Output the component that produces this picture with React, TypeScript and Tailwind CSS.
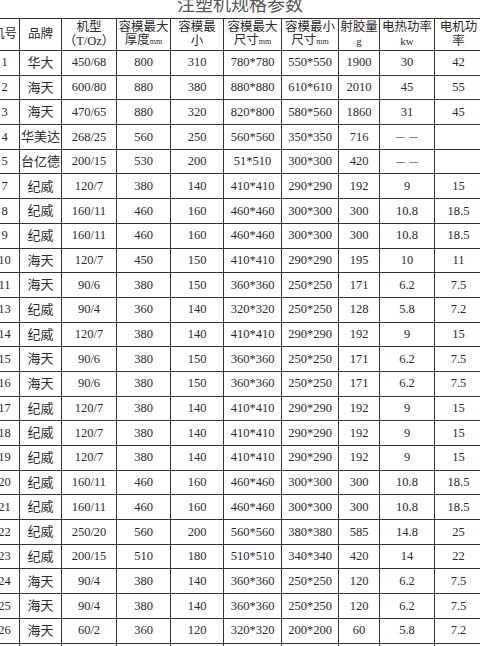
const cols = "grid-cols-[30px_42px_55px_54px_53px_58px_57px_41px_55px_48px]";

const rows: string[][] = [
  ["1", "华大", "450/68", "800", "310", "780*780", "550*550", "1900", "30", "42"],
  ["2", "海天", "600/80", "880", "380", "880*880", "610*610", "2010", "45", "55"],
  ["3", "海天", "470/65", "880", "320", "820*800", "580*560", "1860", "31", "45"],
  ["4", "华美达", "268/25", "560", "250", "560*560", "350*350", "716", "——", ""],
  ["5", "台亿德", "200/15", "530", "200", "51*510", "300*300", "420", "——", ""],
  ["7", "纪威", "120/7", "380", "140", "410*410", "290*290", "192", "9", "15"],
  ["8", "纪威", "160/11", "460", "160", "460*460", "300*300", "300", "10.8", "18.5"],
  ["9", "纪威", "160/11", "460", "160", "460*460", "300*300", "300", "10.8", "18.5"],
  ["10", "海天", "120/7", "450", "150", "410*410", "290*290", "195", "10", "11"],
  ["11", "海天", "90/6", "380", "150", "360*360", "250*250", "171", "6.2", "7.5"],
  ["13", "纪威", "90/4", "360", "140", "320*320", "250*250", "128", "5.8", "7.2"],
  ["14", "纪威", "120/7", "380", "140", "410*410", "290*290", "192", "9", "15"],
  ["15", "海天", "90/6", "380", "150", "360*360", "250*250", "171", "6.2", "7.5"],
  ["16", "海天", "90/6", "380", "150", "360*360", "250*250", "171", "6.2", "7.5"],
  ["17", "纪威", "120/7", "380", "140", "410*410", "290*290", "192", "9", "15"],
  ["18", "纪威", "120/7", "380", "140", "410*410", "290*290", "192", "9", "15"],
  ["19", "纪威", "120/7", "380", "140", "410*410", "290*290", "192", "9", "15"],
  ["20", "纪威", "160/11", "460", "160", "460*460", "300*300", "300", "10.8", "18.5"],
  ["21", "纪威", "160/11", "460", "160", "460*460", "300*300", "300", "10.8", "18.5"],
  ["22", "纪威", "250/20", "560", "200", "560*560", "380*380", "585", "14.8", "25"],
  ["23", "纪威", "200/15", "510", "180", "510*510", "340*340", "420", "14", "22"],
  ["24", "海天", "90/4", "380", "140", "360*360", "250*250", "120", "6.2", "7.5"],
  ["25", "海天", "90/4", "380", "140", "360*360", "250*250", "120", "6.2", "7.5"],
  ["26", "海天", "60/2", "360", "120", "320*320", "200*200", "60", "5.8", "7.2"],
  ["", "", "", "", "", "", "", "", "", ""],
];

const Mm = () => <span className="text-[8px]">mm</span>;

const headers: React.ReactNode[] = [
  "机号",
  "品牌",
  <>机型<br />（T/Oz）</>,
  <>容模最大<br />厚度<Mm /></>,
  <>容模最<br />小</>,
  <>容模最大<br />尺寸<Mm /></>,
  <>容模最小<br />尺寸<Mm /></>,
  <>射胶量<br /><span className="text-[11px]">g</span></>,
  <>电热功率<br /><span className="text-[11px]">kw</span></>,
  <>电机功<br />率</>,
];

const cell = "flex items-center justify-center border-r border-b border-[#333] whitespace-nowrap overflow-hidden";

export default function App() {
  return (
    <div
      className="w-[480px] h-[646px] overflow-hidden bg-white text-[#2b2b2b]"
      style={{ fontFamily: '"Liberation Serif", "Noto Sans CJK SC", serif' }}
    >
      <div className="h-[18px] text-center text-[18px] leading-[10px] text-[#555]">注塑机规格参数</div>
      <div className={`grid ${cols} w-[493px] -ml-[11px] border-t border-l border-[#333] text-[12.5px]`}>
        {headers.map((h, i) => (
          <div key={i} className={`${cell} h-[32px] text-center leading-[13.5px] text-[12.5px]`}>
            <div>{h}</div>
          </div>
        ))}
        {rows.map((r, ri) =>
          r.map((v, ci) => (
            <div
              key={`${ri}-${ci}`}
              className={`${cell} h-[24.7px] ${ci === 1 ? "text-[13px]" : ""} ${v === "——" ? "text-[9px] tracking-[4px] pl-[4px]" : ""}`}
            >
              {v}
            </div>
          ))
        )}
      </div>
    </div>
  );
}
